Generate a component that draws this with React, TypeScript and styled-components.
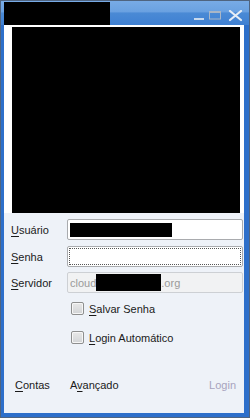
import React from "react";
import styled, { createGlobalStyle } from "styled-components";

const Global = createGlobalStyle`
  html, body { margin: 0; padding: 0; background: #ffffff; }
  body { font-family: "Liberation Sans", Arial, sans-serif; font-size: 11px; }
`;

const Window = styled.div`
  width: 250px;
  height: 418px;
  box-sizing: border-box;
  border: 1px solid #4f6480;
  display: flex;
  flex-direction: column;
  background: #2d6fca;
`;

const TitleBar = styled.div`
  height: 24px;
  flex: none;
  display: flex;
  align-items: flex-end;
  padding-left: 3px;
  background: linear-gradient(
    to bottom,
    #78abe6 0%,
    #6aa1e1 45%,
    #4a8ad5 50%,
    #3f80d2 100%
  );
`;

const Redacted = styled.div<{ $w: number; $h: number }>`
  width: ${(p) => p.$w}px;
  height: ${(p) => p.$h}px;
  background: #000;
  flex: none;
`;

const Controls = styled.div`
  margin-left: auto;
  margin-right: 5px;
  align-self: stretch;
  display: flex;
  align-items: flex-start;
  padding-top: 9px;
`;

const Frame = styled.div`
  flex: 1;
  display: flex;
  padding: 0 5px 4px 3px;
  min-height: 0;
`;

const Client = styled.div`
  flex: 1;
  display: flex;
  flex-direction: column;
  background: #eef2f8;
`;

const Preview = styled.div`
  background: #ffffff;
  padding: 2px 3px 0 8px;
  display: flex;
`;

const Form = styled.div`
  display: flex;
  flex-direction: column;
  padding-top: 6px;
`;

const FieldRow = styled.div<{ $gap: number }>`
  display: grid;
  grid-template-columns: 63px 1fr;
  align-items: center;
  height: 21px;
  margin-bottom: ${(p) => p.$gap}px;
`;

const Label = styled.span`
  padding-left: 7px;
  color: #1a1a1a;
  font-size: 11px;
`;

const Key = styled.span`
  text-decoration: underline;
  text-underline-offset: 2px;
`;

const Input = styled.div<{ $disabled?: boolean; $focused?: boolean }>`
  height: 21px;
  box-sizing: border-box;
  margin-right: 1px;
  border: 1px solid ${(p) => (p.$disabled ? "#cdd0d4" : "#a9abae")};
  border-radius: 2px;
  background: ${(p) => (p.$disabled ? "#f1f2f3" : "#ffffff")};
  display: flex;
  align-items: center;
  padding-left: 2px;
  color: #9a9a9a;
  font-size: 11px;
  ${(p) => (p.$focused ? "outline: 1px dotted #555; outline-offset: -3px;" : "")}
`;

const Checks = styled.div`
  display: flex;
  flex-direction: column;
  gap: 16px;
  padding-top: 9px;
  padding-left: 67px;
`;

const CheckRow = styled.label`
  display: flex;
  align-items: center;
  gap: 5px;
  height: 13px;
  color: #1a1a1a;
  font-size: 11px;
`;

const Box = styled.span`
  width: 13px;
  height: 13px;
  box-sizing: border-box;
  border: 1px solid #8e8f8f;
  border-radius: 2px;
  background: linear-gradient(to bottom, #e8e8e8, #d2d4d6);
  box-shadow: inset 0 0 0 1px #f6f6f6;
  flex: none;
`;

const Footer = styled.div`
  margin-top: auto;
  display: flex;
  align-items: center;
  height: 13px;
  padding: 0 8px 22px 11px;
  font-size: 11px;
  color: #1a1a1a;
`;

const Link = styled.span<{ $muted?: boolean; $push?: boolean }>`
  color: ${(p) => (p.$muted ? "#a7a3bd" : "#1a1a1a")};
  margin-left: ${(p) => (p.$push ? "auto" : "0")};
`;

const Spacer = styled.span`
  width: 20px;
  flex: none;
`;

export default function App() {
  return (
    <>
      <Global />
      <Window>
        <TitleBar>
          <Redacted $w={106} $h={23} />
          <Controls>
            <svg width="50" height="12" viewBox="0 0 50 12">
              <rect x="0" y="8" width="10" height="2" fill="#dfe7f1" opacity="0.85" />
              <rect x="15.5" y="1.5" width="11" height="7.5" fill="none" stroke="#a9b6c6" strokeWidth="1" />
              <rect x="15" y="1" width="12" height="2" fill="#a9b6c6" />
              <path d="M36 1 L47 10 M47 1 L36 10" stroke="#e6edf5" strokeWidth="2.2" strokeLinecap="round" />
            </svg>
          </Controls>
        </TitleBar>
        <Frame>
          <Client>
            <Preview>
              <Redacted $w={228} $h={186} />
            </Preview>
            <Form>
              <FieldRow $gap={6}>
                <Label><Key>U</Key>suário</Label>
                <Input>
                  <Redacted $w={102} $h={14} />
                </Input>
              </FieldRow>
              <FieldRow $gap={5}>
                <Label><Key>S</Key>enha</Label>
                <Input $focused />
              </FieldRow>
              <FieldRow $gap={0}>
                <Label><Key>S</Key>ervidor</Label>
                <Input $disabled>
                  cloud
                  <Redacted $w={65} $h={17} />
                  .org
                </Input>
              </FieldRow>
            </Form>
            <Checks>
              <CheckRow>
                <Box />
                <span><Key>S</Key>alvar Senha</span>
              </CheckRow>
              <CheckRow>
                <Box />
                <span><Key>L</Key>ogin Automático</span>
              </CheckRow>
            </Checks>
            <Footer>
              <Link><Key>C</Key>ontas</Link>
              <Spacer />
              <Link>A<Key>v</Key>ançado</Link>
              <Link $muted $push>Login</Link>
            </Footer>
          </Client>
        </Frame>
      </Window>
    </>
  );
}
